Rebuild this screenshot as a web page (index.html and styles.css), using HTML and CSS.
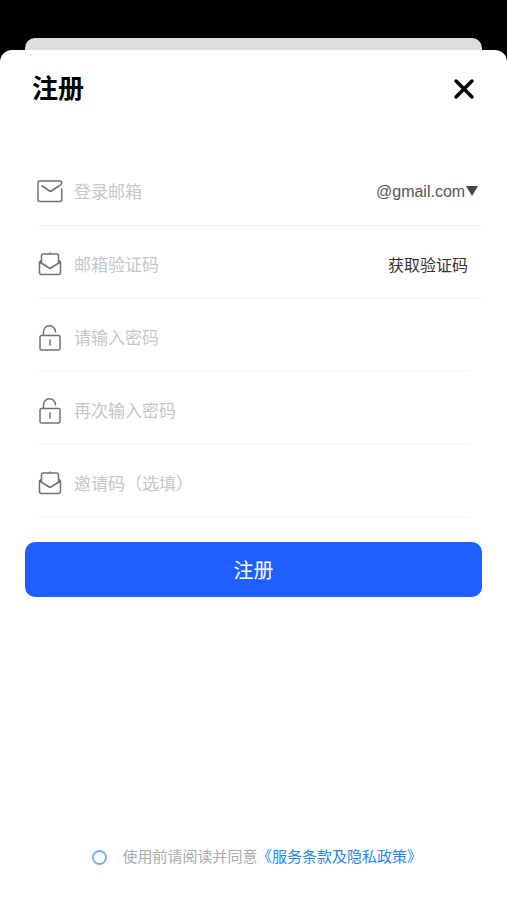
FILE: index.html
```
<!DOCTYPE html>
<html lang="zh-CN">
<head>
<meta charset="utf-8">
<meta name="viewport" content="width=device-width, initial-scale=1">
<title>注册</title>
<link rel="stylesheet" href="styles.css">
</head>
<body>
<svg class="sprite" aria-hidden="true">
  <symbol id="mail" viewBox="0 1 26 26">
    <path d="M24.800 11V21.500a2 2 0 0 1-2 2H3a2 2 0 0 1-2-2V4.500a1.500 1.500 0 0 1 1.500-1.500H23a1.800 1.800 0 0 1 1 3.300L22 8M5 8l8.500 5.500L22 8"/>
  </symbol>
  <symbol id="open-mail" viewBox="0 1 26 26">
    <path d="M4.500 11.500V5a2 2 0 0 1 2-2h13a2 2 0 0 1 2 2v6.500M13 2v1M4.500 9L2.500 11v10.500a2 2 0 0 0 2 2h17a2 2 0 0 0 2-2V11l-2-2M2.500 11l10.500 6.500 10.500-6.500"/>
  </symbol>
  <symbol id="lock" viewBox="0 0 26 26">
    <path d="M6.500 10.500V7a6 6 0 0 1 12-.500v.500M4.500 10.500h17a1.500 1.500 0 0 1 1.500 1.500v11.500a1.500 1.500 0 0 1-1.500 1.500h-17A1.500 1.500 0 0 1 3 23.500V12a1.500 1.500 0 0 1 1.500-1.500zM13 15v5"/>
  </symbol>
</svg>
<div class="backdrop"></div>
<main class="sheet">
  <header class="header">
    <h1 class="title">注册</h1>
    <button class="close" type="button" aria-label="关闭">
      <svg viewBox="0 0 22 22"><path d="M3 3l16 16M19 3L3 19"/></svg>
    </button>
  </header>
  <form class="form">
    <div class="row row-wide">
      <label class="icon" for="email" aria-label="登录邮箱"><svg><use href="#mail"/></svg></label>
      <input class="field" id="email" type="text" placeholder="登录邮箱">
      <label class="domain">
        <select class="select" aria-label="邮箱后缀"><option>@gmail.com</option></select>
        <svg class="arrow" viewBox="0 0 12 12"><path d="M0 1h12L6 11z"/></svg>
      </label>
    </div>
    <div class="row row-wide">
      <label class="icon" for="code" aria-label="邮箱验证码"><svg><use href="#open-mail"/></svg></label>
      <input class="field" id="code" type="text" placeholder="邮箱验证码">
      <button class="get-code" type="button">获取验证码</button>
    </div>
    <div class="row">
      <label class="icon" for="password" aria-label="请输入密码"><svg><use href="#lock"/></svg></label>
      <input class="field" id="password" type="password" placeholder="请输入密码">
    </div>
    <div class="row">
      <label class="icon" for="repeat" aria-label="再次输入密码"><svg><use href="#lock"/></svg></label>
      <input class="field" id="repeat" type="password" placeholder="再次输入密码">
    </div>
    <div class="row">
      <label class="icon" for="invite" aria-label="邀请码（选填）"><svg><use href="#open-mail"/></svg></label>
      <input class="field" id="invite" type="text" placeholder="邀请码（选填）">
    </div>
    <button class="submit" type="submit">注册</button>
  </form>
  <footer class="footer">
    <input class="agree" id="agree" type="checkbox">
    <p class="terms"><label for="agree">使用前请阅读并同意</label><a href="#terms">《服务条款及隐私政策》</a></p>
  </footer>
</main>
</body>
</html>
```
FILE: styles.css
```
* {
  box-sizing: border-box;
}

body {
  margin: 0;
  min-height: 100vh;
  padding-top: 38px;
  display: flex;
  flex-direction: column;
  background: #000;
  font-family: "Liberation Sans", "Noto Sans CJK SC", sans-serif;
}

button,
input,
select {
  font-family: inherit;
  border: 0;
  padding: 0;
  background: none;
}

.sprite {
  position: absolute;
  width: 0;
  height: 0;
}

.backdrop {
  height: 12px;
  margin: 0 25px;
  border-radius: 10px 10px 0 0;
  background: #dedede;
}

.sheet {
  flex: 1;
  display: flex;
  flex-direction: column;
  border-radius: 12px 12px 0 0;
  background: #fff;
}

.header {
  display: flex;
  align-items: center;
  justify-content: space-between;
  height: 78px;
  padding: 0 32px;
}

.title {
  margin: 0;
  font-size: 26px;
  line-height: 38px;
  font-weight: 600;
}

.close {
  width: 22px;
  height: 22px;
}

.close svg {
  display: block;
  fill: none;
  stroke: #000;
  stroke-width: 3.5;
  stroke-linecap: round;
}

.form {
  padding: 25px 25px 0;
}

.row {
  display: flex;
  align-items: center;
  height: 73px;
  margin: 0 13px 0 12px;
  padding-top: 6px;
  border-bottom: 2px solid #f8f8f8;
}

.row-wide {
  margin-right: 1px;
  border-bottom: 1px solid #f0f0f0;
}

.icon {
  width: 26px;
  height: 26px;
  margin-right: 11px;
}

.icon svg {
  display: block;
  width: 26px;
  height: 26px;
  fill: none;
  stroke: #707070;
  stroke-width: 1.5;
  stroke-linecap: round;
  stroke-linejoin: round;
}

.field {
  flex: 1;
  min-width: 0;
  height: 40px;
  padding-top: 2px;
  font-size: 17px;
  color: #333;
  outline: 0;
}

.field::placeholder {
  color: #c6c6c6;
}

.domain {
  display: flex;
  align-items: center;
  margin-right: 3px;
  padding-bottom: 2px;
}

.select {
  appearance: none;
  font-size: 16px;
  color: #555;
}

.arrow {
  width: 12px;
  height: 12px;
  fill: #444;
}

.get-code {
  margin-right: 13px;
  padding-bottom: 2px;
  font-size: 16px;
  color: #333;
}

.submit {
  display: block;
  width: 100%;
  height: 55px;
  margin-top: 24px;
  border-radius: 10px;
  background: #1f5fff;
  color: #fff;
  font-size: 20px;
}

.footer {
  display: flex;
  align-items: center;
  justify-content: center;
  margin-top: auto;
  padding: 24px 0 31px;
}

.agree {
  appearance: none;
  width: 15px;
  height: 15px;
  margin: 0 15px 0 0;
  border: 2px solid #82a8f8;
  border-radius: 50%;
}

.terms {
  margin: 0;
  font-size: 15px;
  line-height: 24px;
  color: #aaa;
}

.terms a {
  margin-left: 7px;
  color: #1f86f0;
  font-feature-settings: "halt";
  text-decoration: none;
}
```
